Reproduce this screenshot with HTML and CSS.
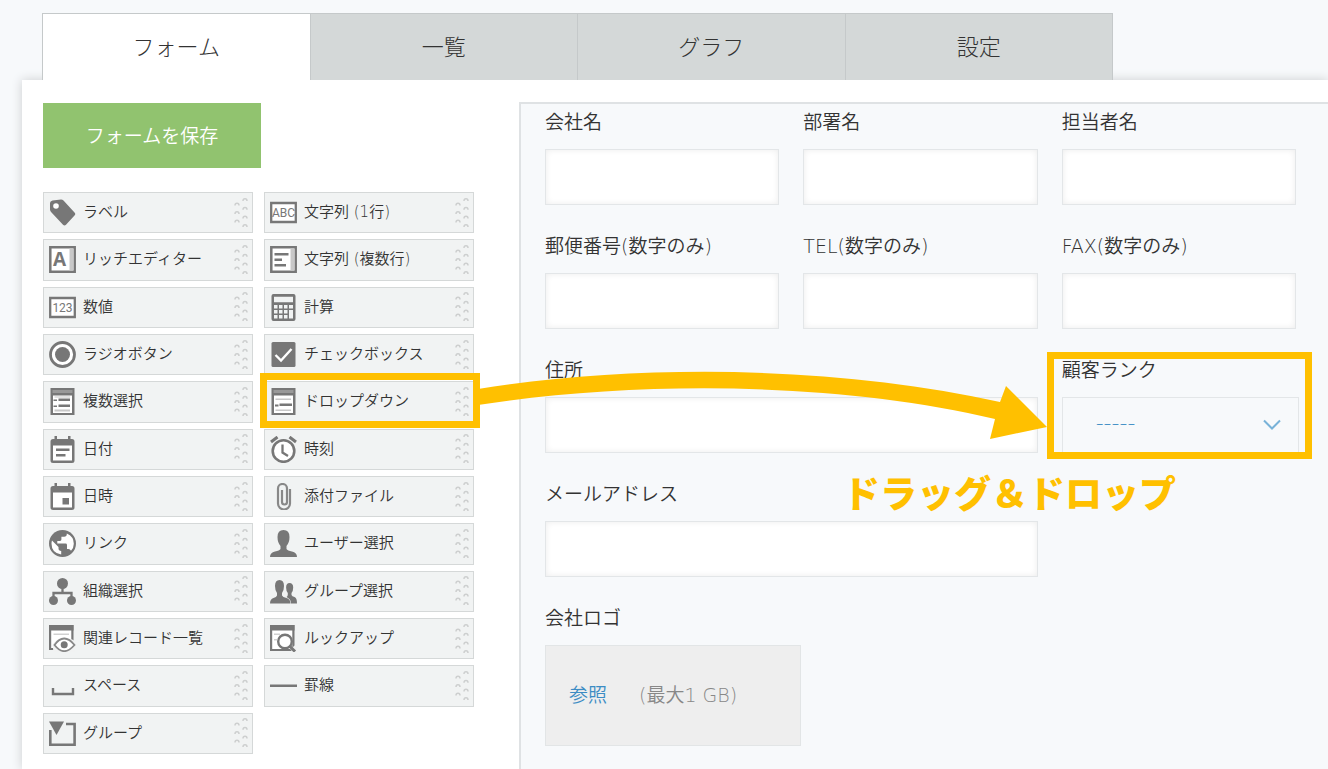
FILE: index.html
```html
<!DOCTYPE html>
<html lang="ja">
<head>
<meta charset="utf-8">
<title>フォーム</title>
<link rel="stylesheet" href="styles.css">
</head>
<body>
<svg class="defs" aria-hidden="true">
  <symbol id="grip" viewBox="0 0 14 32">
    <g fill="none" stroke="#cdcfcf" stroke-width="1.5">
      <path d="M1 8.500q0-2.200 2-2.200t2 2.200M1 17q0-2.200 2-2.200t2 2.200M1 25.500q0-2.200 2-2.200t2 2.200"/>
      <path d="M9 4q0-2.200 2-2.200t2 2.200M9 12.700q0-2.200 2-2.200t2 2.200M9 21.500q0-2.200 2-2.200t2 2.200M9 30q0-2.200 2-2.200t2 2.200"/>
    </g>
  </symbol>
  <symbol id="tag" viewBox="0 0 27 27"><path d="M3.500 1.500L12 .500Q13.500.500 14.500 1.500L25.500 13.500Q27 15 25.500 16.500L17 25.800Q15.500 27.200 14 25.800L2.500 13.500Q1 12 1 10.500L1 4Q1 2 3.500 1.500z"/><circle cx="7" cy="7" r="2.800" fill="#fff"/></symbol>
  <symbol id="lines" viewBox="0 0 27 27"><path fill="#fff" stroke="#777" stroke-width="2.500" d="M1.300 1.300h24.400v24.400H1.300z"/><path fill="#c8c8c8" d="M20.500 2.500h4v22h-4z"/><path d="M4.500 7h14v2.500h-14zM4.500 12.500h7.500v2.500H4.500zM4.500 18h11.500v2.500H4.500z"/></symbol>
  <symbol id="calc" viewBox="0 0 27 27"><path fill-rule="evenodd" d="M3.500 0h20q2 0 2 2v23q0 2-2 2h-20q-2 0-2-2V2q0-2 2-2zM4 2.800v5.400h19V2.800zM4 11v3.500h3.500V11zM9 11v3.500h3.500V11zM14 11v3.500h3.500V11zM19 11v3.500h4V11zM4 16v3.500h3.500V16zM9 16v3.500h3.500V16zM14 16v3.500h3.500V16zM19 16v8.500h4V16zM4 21v3.500h3.500V21zM9 21v3.500h3.500V21zM14 21v3.500h3.500V21z"/></symbol>
  <symbol id="radio" viewBox="0 0 27 27"><circle cx="13.500" cy="13.500" r="12" fill="#fff" stroke="#777" stroke-width="2.800"/><circle cx="13.500" cy="13.500" r="7.500"/></symbol>
  <symbol id="check" viewBox="0 0 27 27"><path d="M3 1h21q1.500 0 1.500 1.500v22q0 1.500-1.500 1.500H3q-1.500 0-1.500-1.500v-22Q1.500 1 3 1z"/><path fill="none" stroke="#fff" stroke-width="2.400" d="M5.500 14l5.500 5.500L21.500 8"/></symbol>
  <symbol id="multi" viewBox="0 0 27 27"><path d="M1.500 0h24v27h-24z"/><path fill="#999" d="M3.500 2h20v3h-20z"/><path fill="#fff" d="M4 7.500h19V25H4z"/><path d="M4.500 11.500h3.500v1.500H4.500zM9.500 10.500H21v2.500H9.500zM4.500 17.500h3.500v1.500H4.500zM9.500 16.500H21v2.500H9.500z"/><path fill="#c8c8c8" d="M5.500 8.500H21v1H5.500zM5.500 21.500H21v2H5.500z"/></symbol>
  <symbol id="drop" viewBox="0 0 27 27"><path d="M1.500 0h24v27h-24z"/><path fill="#999" d="M3.500 2h20v3h-20z"/><path fill="#fff" d="M4 7.500h19V25H4z"/><path d="M5 16.500h3.500v2H5zM9.500 15.500H22v2.500H9.500z"/><path fill="#c8c8c8" d="M5.500 10.500H21v1.500H5.500zM5.500 21.500H21v1.500H5.500z"/></symbol>
  <symbol id="date" viewBox="0 0 27 27"><path d="M5.500 0H8v3h11V0h2.500v3H23q2.500 0 2.500 2.500v19Q25.500 27 23 27H4q-2.500 0-2.500-2.500v-19Q1.500 3 4 3h1.500z"/><path fill="#fff" d="M4 9.500h19v15H4z"/><path d="M7 12.500h13.500V15H7zM7 18h9.500v2.500H7z"/></symbol>
  <symbol id="datetime" viewBox="0 0 27 27"><path d="M5.500 0H8v3h11V0h2.500v3H23q2.500 0 2.500 2.500v19Q25.500 27 23 27H4q-2.500 0-2.500-2.500v-19Q1.500 3 4 3h1.500z"/><path fill="#fff" d="M4 9.500h19v15H4z"/><path d="M13.500 15h6.500v6.500h-6.500z"/></symbol>
  <symbol id="time" viewBox="0 0 27 27"><circle cx="13.500" cy="15" r="10.800" fill="#fff" stroke="#777" stroke-width="2.600"/><path fill="none" stroke="#777" stroke-width="3" d="M1 6l6.500-5M26 6l-6.500-5"/><path fill="none" stroke="#777" stroke-width="2.300" d="M12.500 8.500v8l5.500 3.500"/></symbol>
  <symbol id="clip" viewBox="0 0 27 27"><path fill="none" stroke="#888" stroke-width="2.200" d="M20 6v14.500a6 6 0 0 1-12 0V5.500a4.500 4.500 0 0 1 9 0V19a2.500 2.500 0 0 1-5 0V7"/></symbol>
  <symbol id="link" viewBox="0 0 27 27"><circle cx="13.500" cy="13.500" r="13.500"/><path fill="#fff" d="M3 10.500l6.500 6.500v1.300q0 2.700 2.700 2.700v3.500Q2.500 23 2.500 13.500q0-1.500.5-3zM22 20.800q-.8-1.800-2.600-1.800H18v-4q0-1.400-1.400-1.400H8.300V11H11q1.400 0 1.400-1.400V6.800h2.700q2.700 0 2.700-2.700v-.6q7 3 7 10.300 0 4-2.800 7z"/></symbol>
  <symbol id="user" viewBox="0 0 27 27"><path d="M13.500 0q6 0 6 7 0 5.500-3 9v3q1 1.800 5.500 2.500 5 1 5 5.500H0q0-4.500 5-5.500 4.500-.700 5.500-2.500v-3q-3-3.500-3-9 0-7 6-7z"/></symbol>
  <symbol id="org" viewBox="0 0 27 27"><circle cx="13.500" cy="5.500" r="5.500"/><circle cx="4.500" cy="22.500" r="4.500"/><circle cx="22.500" cy="22.500" r="4.500"/><path fill="none" stroke="#777" stroke-width="2.300" d="M13.500 9v6M4.500 20v-5h18v5"/></symbol>
  <symbol id="users" viewBox="0 0 27 27"><path d="M19.500 5q3.700 0 3.700 4.500 0 3.500-1.700 5.500v2q.5 1.500 3 2 2.500.8 2.500 6.500h-6q0-4-3-5.500l-1.500-1q1.500-.5 1.300-4-1.700-2-1.700-5.500Q16.100 5 19.500 5z"/><path d="M9.500 2Q14 2 14 8q0 4.500-2 7v2.500q.7 1.500 4.500 2.500 4 1 4 5.500H0Q0 21 3.500 20q3-.8 3.500-2.500V15Q5 12.500 5 8q0-6 4.500-6z"/></symbol>
  <symbol id="related" viewBox="0 0 27 27"><path fill="#fff" stroke="#777" stroke-width="2.200" d="M1.100 1.100h22.300V24H1.100z"/><path d="M0 0h24.500v5.500H0z"/><path fill="#d0d0d0" d="M4.500 8.500H20V10H4.500z"/><path fill="#f1f2f2" d="M3.500 20Q8 12.500 15.200 12.500 20 12.500 26 16v11H4.500z"/><path fill="#fff" stroke="#888" stroke-width="1.800" d="M5.500 20Q10 13.500 15.200 13.500T25.500 20Q20 26.200 15.200 26.200T5.500 20z"/><circle cx="15.200" cy="19.800" r="3.500"/></symbol>
  <symbol id="lookup" viewBox="0 0 27 27"><path fill="#fff" stroke="#777" stroke-width="2.200" d="M1.100 1.100h22.300V25H1.100z"/><path d="M0 0h24.500v5.500H0z"/><path fill="#d0d0d0" d="M4 8.500h6V10H4zM4 14h3v1.500H4z"/><circle cx="15" cy="16.500" r="6.800" fill="#fff" stroke="#777" stroke-width="2.400"/><path stroke="#f1f2f2" stroke-width="6" d="M22.500 22.500l4 4"/><path stroke="#777" stroke-width="3" d="M19.500 21l5.500 5.500"/></symbol>
  <symbol id="space" viewBox="0 0 27 27"><path fill="none" stroke="#777" stroke-width="2.400" d="M4 16v6h20v-6"/></symbol>
  <symbol id="rule" viewBox="0 0 27 27"><path d="M0 12.500h27V15H0z"/></symbol>
  <symbol id="group" viewBox="0 0 27 27"><path fill="none" stroke="#777" stroke-width="2.600" d="M17 4h8.600v20.700H1.300V10"/><path d="M0 1.500h15L7.500 15z"/></symbol>
</svg>

<div class="page">
  <nav class="tabs">
    <button class="tab tab-active" type="button">フォーム</button>
    <button class="tab" type="button">一覧</button>
    <button class="tab" type="button">グラフ</button>
    <button class="tab" type="button">設定</button>
  </nav>

  <main class="panel">
    <section class="palette">
      <button class="save" type="button">フォームを保存</button>
      <ul class="parts">
        <li class="part"><svg class="icon"><use href="#tag"/></svg><span class="part-name">ラベル</span><svg class="grip"><use href="#grip"/></svg></li>
        <li class="part"><svg class="icon" viewBox="0 0 27 27"><path fill="#fff" stroke="#777" stroke-width="2.300" d="M1.200 4h24.600v19H1.200z"/><text class="glyph" x="13.500" y="18" text-anchor="middle">ABC</text></svg><span class="part-name">文字列 (1行)</span><svg class="grip"><use href="#grip"/></svg></li>
        <li class="part"><svg class="icon" viewBox="0 0 27 27"><path fill="#fff" stroke="#777" stroke-width="2.500" d="M1.300 1.300h24.400v24.400H1.300z"/><path fill="#c8c8c8" d="M20.500 2.500h4v22h-4z"/><text class="glyph-bold" x="10.500" y="20" text-anchor="middle">A</text></svg><span class="part-name">リッチエディター</span><svg class="grip"><use href="#grip"/></svg></li>
        <li class="part"><svg class="icon"><use href="#lines"/></svg><span class="part-name">文字列 (複数行)</span><svg class="grip"><use href="#grip"/></svg></li>
        <li class="part"><svg class="icon" viewBox="0 0 27 27"><path fill="#fff" stroke="#777" stroke-width="2.300" d="M1.200 4h24.600v19H1.200z"/><text class="glyph" x="13.500" y="18" text-anchor="middle">123</text></svg><span class="part-name">数値</span><svg class="grip"><use href="#grip"/></svg></li>
        <li class="part"><svg class="icon"><use href="#calc"/></svg><span class="part-name">計算</span><svg class="grip"><use href="#grip"/></svg></li>
        <li class="part"><svg class="icon"><use href="#radio"/></svg><span class="part-name">ラジオボタン</span><svg class="grip"><use href="#grip"/></svg></li>
        <li class="part"><svg class="icon"><use href="#check"/></svg><span class="part-name">チェックボックス</span><svg class="grip"><use href="#grip"/></svg></li>
        <li class="part"><svg class="icon"><use href="#multi"/></svg><span class="part-name">複数選択</span><svg class="grip"><use href="#grip"/></svg></li>
        <li class="part part-marked"><svg class="icon"><use href="#drop"/></svg><span class="part-name">ドロップダウン</span><svg class="grip"><use href="#grip"/></svg></li>
        <li class="part"><svg class="icon"><use href="#date"/></svg><span class="part-name">日付</span><svg class="grip"><use href="#grip"/></svg></li>
        <li class="part"><svg class="icon"><use href="#time"/></svg><span class="part-name">時刻</span><svg class="grip"><use href="#grip"/></svg></li>
        <li class="part"><svg class="icon"><use href="#datetime"/></svg><span class="part-name">日時</span><svg class="grip"><use href="#grip"/></svg></li>
        <li class="part"><svg class="icon"><use href="#clip"/></svg><span class="part-name">添付ファイル</span><svg class="grip"><use href="#grip"/></svg></li>
        <li class="part"><svg class="icon"><use href="#link"/></svg><span class="part-name">リンク</span><svg class="grip"><use href="#grip"/></svg></li>
        <li class="part"><svg class="icon"><use href="#user"/></svg><span class="part-name">ユーザー選択</span><svg class="grip"><use href="#grip"/></svg></li>
        <li class="part"><svg class="icon"><use href="#org"/></svg><span class="part-name">組織選択</span><svg class="grip"><use href="#grip"/></svg></li>
        <li class="part"><svg class="icon"><use href="#users"/></svg><span class="part-name">グループ選択</span><svg class="grip"><use href="#grip"/></svg></li>
        <li class="part"><svg class="icon"><use href="#related"/></svg><span class="part-name">関連レコード一覧</span><svg class="grip"><use href="#grip"/></svg></li>
        <li class="part"><svg class="icon"><use href="#lookup"/></svg><span class="part-name">ルックアップ</span><svg class="grip"><use href="#grip"/></svg></li>
        <li class="part"><svg class="icon"><use href="#space"/></svg><span class="part-name">スペース</span><svg class="grip"><use href="#grip"/></svg></li>
        <li class="part"><svg class="icon"><use href="#rule"/></svg><span class="part-name">罫線</span><svg class="grip"><use href="#grip"/></svg></li>
        <li class="part"><svg class="icon"><use href="#group"/></svg><span class="part-name">グループ</span><svg class="grip"><use href="#grip"/></svg></li>
      </ul>
    </section>

    <form class="canvas">
      <div class="field"><label class="label" for="company">会社名</label><input class="input" id="company" type="text"></div>
      <div class="field"><label class="label" for="dept">部署名</label><input class="input" id="dept" type="text"></div>
      <div class="field"><label class="label" for="person">担当者名</label><input class="input" id="person" type="text"></div>
      <div class="field"><label class="label" for="zip">郵便番号(数字のみ)</label><input class="input" id="zip" type="text"></div>
      <div class="field"><label class="label" for="tel">TEL(数字のみ)</label><input class="input" id="tel" type="text"></div>
      <div class="field"><label class="label" for="fax">FAX(数字のみ)</label><input class="input" id="fax" type="text"></div>
      <div class="field field-wide"><label class="label" for="address">住所</label><input class="input" id="address" type="text"></div>
      <div class="field field-marked">
        <label class="label" for="rank">顧客ランク</label>
        <div class="select-box">
          <select class="select" id="rank"><option>-----</option></select>
          <svg class="chevron" viewBox="0 0 18 12"><path d="M1 1.500l8 8 8-8"/></svg>
        </div>
      </div>
      <div class="field field-wide"><label class="label" for="mail">メールアドレス</label><input class="input" id="mail" type="text"></div>
      <div class="field field-wide">
        <span class="label">会社ロゴ</span>
        <div class="file-box"><button class="browse" type="button">参照</button><span class="limit">(最大1 GB)</span></div>
      </div>
    </form>
  </main>

  <svg class="arrow" viewBox="0 0 570 70" aria-hidden="true"><path d="M0 19C162 -7 362 -4 522 32L528 16 569 57 512 69 517 49C362 12 162 10 0 35z"/></svg>
  <p class="caption">ドラッグ＆ドロップ</p>
</div>
</body>
</html>
```
FILE: styles.css
```css
* {
  box-sizing: border-box;
}

body {
  margin: 0;
  background: #f7f9fb;
  color: #333;
  font-family: "DejaVu Sans", "Noto Sans CJK JP", sans-serif;
  font-weight: 350;
}

button,
input,
select {
  font: inherit;
  color: inherit;
}

.defs {
  display: none;
}

.page {
  position: relative;
  display: flex;
  flex-direction: column;
  min-height: 100vh;
  padding-top: 13px;
  overflow: hidden;
}

.tabs {
  position: relative;
  z-index: 1;
  display: flex;
  max-width: 1071px;
  margin-left: 42px;
  border: 1px solid #c5c9ca;
  border-bottom: 0;
}

.tab {
  flex: 1;
  height: 66px;
  padding: 0 0 5px;
  border: 0;
  border-left: 1px solid #c5c9ca;
  background: #d4d8d8;
  font-size: 22px;
  font-weight: 300;
}

.tab-active {
  border-left: 0;
  background: #fff;
}

.panel {
  display: flex;
  flex: 1;
  gap: 45px;
  margin-left: 22px;
  padding: 22px 0 0 21px;
  background: #fff;
  box-shadow: 0 0 10px #ccced0;
}

.palette {
  flex: 0 0 431px;
  padding-top: 1px;
}

.save {
  width: 218px;
  height: 65px;
  padding: 0 0 3px;
  border: 0;
  background: #91c36f;
  color: #fff;
  font-size: 19px;
}

.parts {
  display: grid;
  grid-template-columns: 1fr 1fr;
  grid-template-rows: repeat(12, 1fr);
  gap: 6px 11px;
  height: 562px;
  margin: 24px 0 0;
  padding: 0;
  list-style: none;
}

.part {
  position: relative;
  display: flex;
  align-items: center;
  gap: 7px;
  padding: 0 4px 0 5px;
  border: 1px solid #d5d8d8;
  background: #f1f3f3;
  font-size: 15px;
  line-height: 24px;
}

.part-name {
  flex: 1;
  padding-bottom: 1px;
}

.icon {
  width: 27px;
  height: 27px;
  fill: #777;
}

.glyph {
  font-family: Roboto, sans-serif;
  font-size: 12px;
  font-weight: 400;
}

.glyph-bold {
  font-family: "Open Sans", sans-serif;
  font-size: 19px;
  font-weight: 700;
}

.grip {
  width: 14px;
  height: 32px;
}

.part-marked::after {
  content: "";
  position: absolute;
  inset: -9px -7px -6px -5px;
  border: 7px solid #ffc000;
}

.canvas {
  display: grid;
  flex: 1;
  grid-template-columns: repeat(3, minmax(0, 1fr));
  align-content: start;
  gap: 23px 24px;
  padding: 0 32px 0 24px;
  border: solid #dfe2e4;
  border-width: 2px 0 0 2px;
  background: #f7f9fb;
  font-size: 19px;
}

.field {
  position: relative;
  display: flex;
  flex-direction: column;
  align-items: stretch;
  gap: 9px;
}

.field-wide {
  grid-column: 1 / span 2;
}

.label {
  line-height: 36px;
}

.input {
  width: 100%;
  height: 56px;
  padding: 0 12px;
  border: 1px solid #e3e6e8;
  background: #fff;
  box-shadow: inset 0 0 6px #ececec;
}

.select-box {
  position: relative;
  margin-right: -3px;
}

.select {
  width: 100%;
  height: 56px;
  padding: 0 33px 5px;
  border: 1px solid #e3e6e8;
  appearance: none;
  background: transparent;
  color: #3c8cc4;
  font-size: 22px;
}

.chevron {
  position: absolute;
  top: 22px;
  right: 18px;
  width: 18px;
  height: 12px;
  fill: none;
  stroke: #78b2d8;
  stroke-width: 2px;
  pointer-events: none;
}

.field-marked::after {
  content: "";
  position: absolute;
  inset: 0 -16px -6px -15px;
  border: 7px solid #ffc000;
  pointer-events: none;
}

.file-box {
  display: flex;
  align-items: center;
  gap: 32px;
  width: 256px;
  height: 101px;
  padding: 0 23px 5px;
  border: 1px solid #e2e5e6;
  background: #eee;
}

.browse {
  padding: 0;
  border: 0;
  background: none;
  color: #3c8cc4;
}

.limit {
  color: #888;
}

.arrow {
  position: absolute;
  top: 370px;
  left: 478px;
  width: 570px;
  height: 70px;
  fill: #ffc000;
}

.caption {
  position: absolute;
  top: 468px;
  left: 843px;
  margin: 0;
  color: #ffc000;
  font-size: 37px;
  font-weight: 900;
  line-height: 56px;
  white-space: nowrap;
}
```
